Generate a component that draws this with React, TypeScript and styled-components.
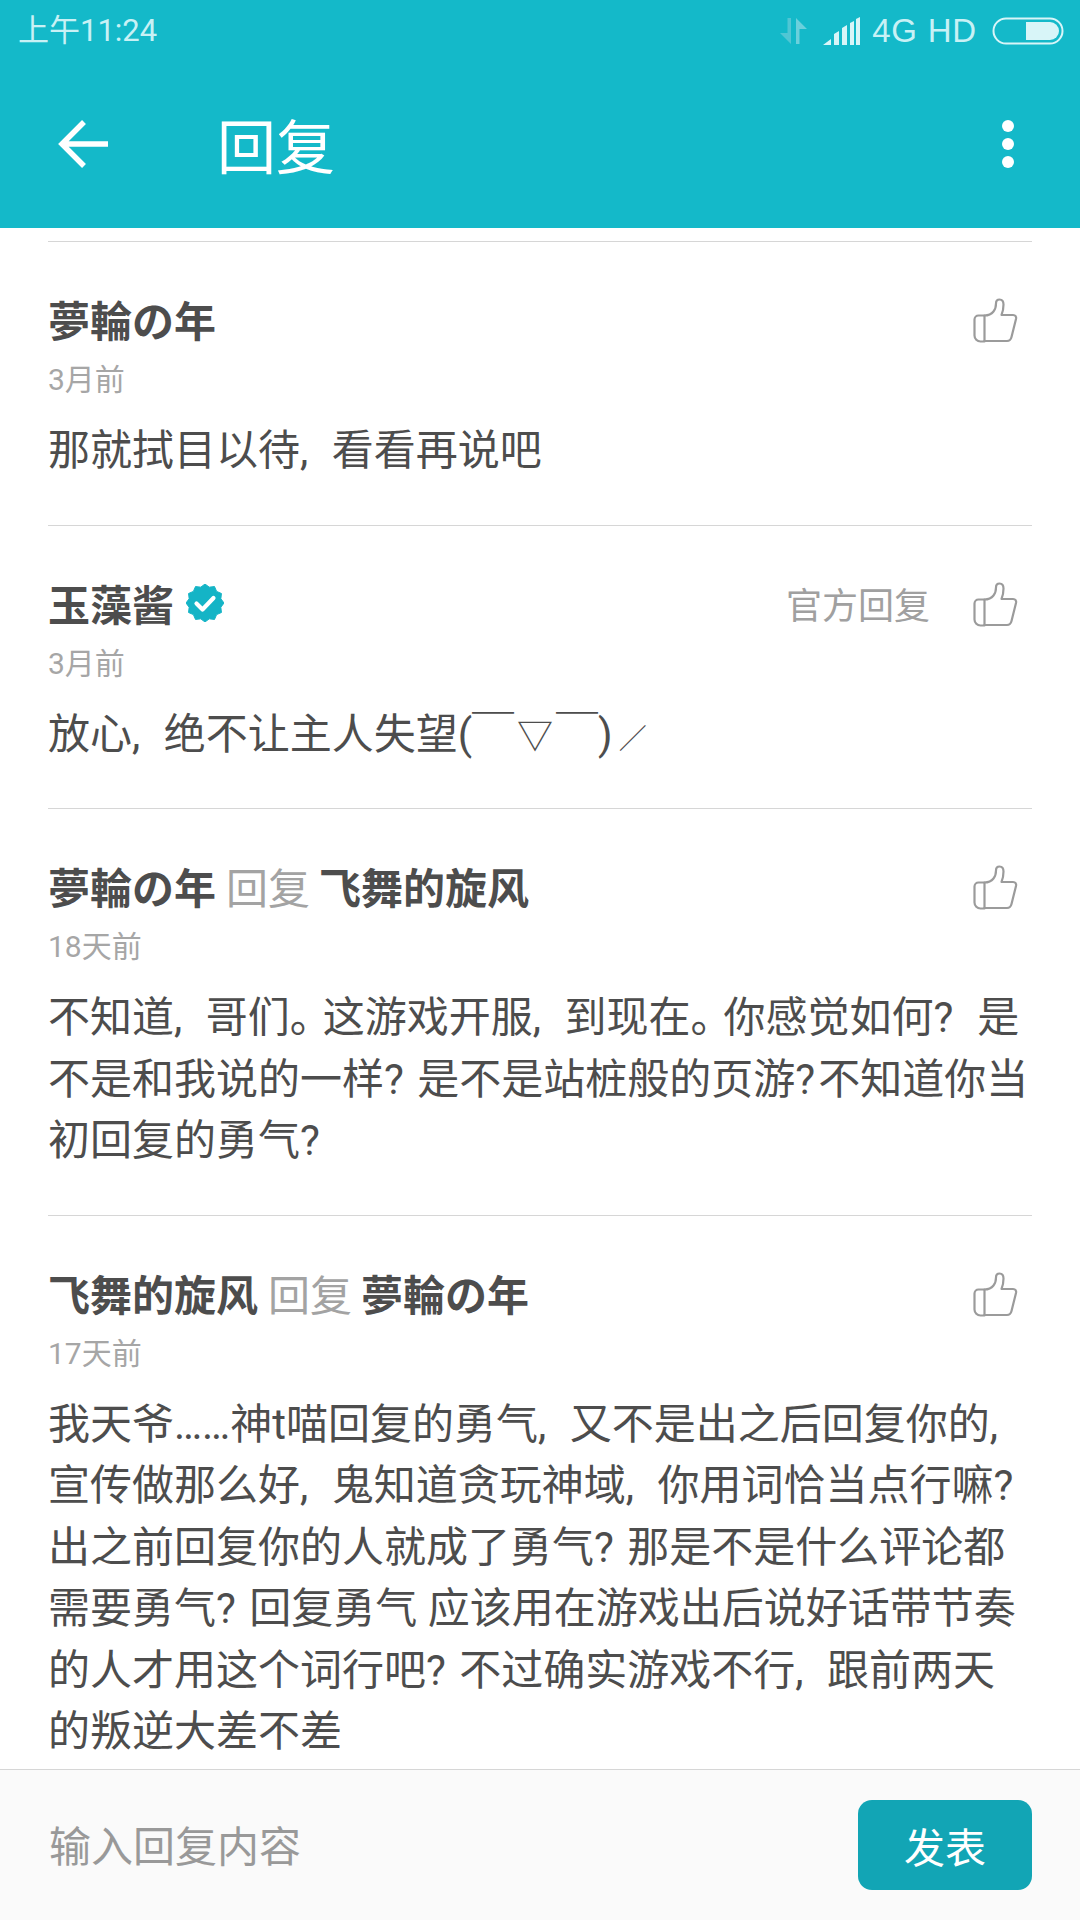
import React from 'react';
import styled, { createGlobalStyle } from 'styled-components';

const Global = createGlobalStyle`
  html, body { margin: 0; padding: 0; background: #fff; }
  body { font-family: "Noto Sans CJK SC", "Noto Sans", sans-serif; }
`;

const Screen = styled.div`
  width: 1080px;
  height: 1920px;
  display: flex;
  flex-direction: column;
  overflow: hidden;
  background: #fff;
`;

const Header = styled.header`
  height: 228px;
  flex: none;
  background: #14b9c9;
  display: flex;
  flex-direction: column;
`;

const StatusBar = styled.div`
  height: 62px;
  padding: 0 16px 0 18px;
  display: flex;
  align-items: center;
  color: #c8f1f5;
`;

const Clock = styled.span`
  font: 31px/62px Roboto, "Noto Sans CJK SC", sans-serif;
  flex: 1;
`;

const StatusIcons = styled.div`
  display: flex;
  align-items: center;
`;

const SignalIcon = styled.svg`
  margin-left: 14px;
`;

const Network = styled.span`
  font: 33px/60px "Liberation Sans", sans-serif;
  margin: 0 15px 0 11px;
  letter-spacing: 0.8px;
  white-space: nowrap;
`;

const NavBar = styled.div`
  flex: 1;
  display: flex;
  align-items: center;
  padding: 0 0 2px 58px;
`;

const Title = styled.h1`
  margin: 0 0 0 109px;
  flex: 1;
  font-size: 59px;
  line-height: 72px;
  font-weight: 400;
  color: #fff;
`;

const Dots = styled.div`
  display: flex;
  flex-direction: column;
  gap: 6px;
  margin-right: 66px;
`;

const Dot = styled.i`
  width: 12px;
  height: 12px;
  border-radius: 50%;
  background: #fff;
`;

const List = styled.main`
  flex: 1;
  min-height: 0;
  overflow: hidden;
  padding: 13px 48px 0 48px;
`;

const Comment = styled.article`
  border-top: 1px solid #d6d6d6;
  padding: 47px 0 43px 0;
`;

const NameRow = styled.div`
  display: flex;
  align-items: center;
  height: 60px;
`;

const Names = styled.div`
  flex: 1;
  display: flex;
  align-items: center;
  font-size: 42px;
  line-height: 60px;
  color: #4d4d4d;
`;

const Name = styled.strong`
  font-weight: 700;
`;

const Reply = styled.span`
  color: #a3a3a3;
  margin: 0 9px 0 10px;
`;

const Official = styled.span`
  font-size: 36px;
  color: #a0a0a0;
  margin: 0 42px 0 0;
`;

const Thumb = styled.svg`
  width: 46px;
  height: 46px;
  margin: 4px 14px 0 0;
  flex: none;
`;

const Badge = styled.svg`
  width: 38px;
  height: 38px;
  margin-left: 12px;
`;

const Time = styled.div`
  font: 30px/40px Roboto, "Noto Sans CJK SC", sans-serif;
  color: #a6a6a6;
  margin: 11px 0 20px;
`;

const Body = styled.p`
  margin: 0;
  font: 42px/61.5px Roboto, "Noto Sans CJK SC", sans-serif;
  color: #4d4d4d;
`;

const Line = styled.span`
  display: block;
  white-space: pre;
`;

const Comma = styled.span`
  margin-right: 13px;
`;

const Stop = styled.span`
  letter-spacing: -9px;
`;

const Ask = styled.span`
  margin-right: 3px;
`;

const Face = styled.span<{ $size: number; $gap: number }>`
  font-size: ${(p) => p.$size}px;
  line-height: 0;
  margin: 0 ${(p) => p.$gap}px;
`;

const Footer = styled.footer`
  height: 151px;
  flex: none;
  box-sizing: border-box;
  border-top: 1px solid #d6d6d6;
  background: #fafafa;
  display: flex;
  align-items: center;
  justify-content: space-between;
  padding: 0 48px 0 49px;
`;

const Placeholder = styled.span`
  font-size: 42px;
  color: #999;
  margin-bottom: 4px;
`;

const Send = styled.button`
  width: 174px;
  height: 90px;
  border: 0;
  border-radius: 14px;
  background: #12a5b5;
  color: #fff;
  font: 41px "Noto Sans CJK SC", sans-serif;
  padding: 0;
`;

const ThumbIcon = () => (
  <Thumb viewBox="0 0 46 46" fill="none" stroke="#9b9b9b" strokeWidth="2.2" strokeLinejoin="round" strokeLinecap="round">
    <path d="M12.5 17.5h-6a4 4 0 0 0-4 4v16a6 6 0 0 0 6 6h4z" />
    <path d="M12.5 17.5c4 0 7-1.500 9-4 2.500-3 2.500-5 2.500-8 0-2.500 1.500-4 3.500-4 2.500 0 4 2 4 5 0 3-.5 7-2 10.500h11.500c2.500 0 3.500 1.500 3 4l-4.500 18c-.6 2.500-2.200 4-4.500 4H12.500" />
  </Thumb>
);

const VerifiedBadge = () => {
  const pts: string[] = [];
  for (let i = 0; i < 24; i++) {
    const r = i % 2 === 0 ? 19 : 16.4;
    const a = (i / 24) * Math.PI * 2;
    pts.push(`${(19 + r * Math.sin(a)).toFixed(2)},${(19 - r * Math.cos(a)).toFixed(2)}`);
  }
  return (
    <Badge viewBox="0 0 38 38">
      <polygon points={pts.join(' ')} fill="#14b4c6" stroke="#14b4c6" strokeWidth="1" strokeLinejoin="round" />
      <path d="M10.500 19.500l6 6 11-11.500" fill="none" stroke="#fff" strokeWidth="4.200" strokeLinecap="round" strokeLinejoin="round" />
    </Badge>
  );
};

const App = () => (
  <Screen>
    <Global />
    <Header>
      <StatusBar>
        <Clock>上午11:24</Clock>
        <StatusIcons>
          <svg width="30" height="30" viewBox="0 0 30 30">
            <path d="M12 28L1 17h7.500V2H12z" fill="#50c6d4" />
            <path d="M17 2l11 11h-7.500v15H17z" fill="#6bd0dc" />
          </svg>
          <SignalIcon width="38" height="28" viewBox="0 0 38 28" fill="#d8f5f8">
            <path d="M0 28l8-6v6zM11 28v-11l5-3v14zM19 28V11l5-3v20zM27 28V6l4-2v24zM33 28V2l4-2v28z" />
          </SignalIcon>
          <Network>4G HD</Network>
          <svg width="72" height="28" viewBox="0 0 72 28">
            <rect x="1.500" y="1.500" width="69" height="25" rx="12.500" fill="none" stroke="#d8f5f8" strokeWidth="2" />
            <path d="M34 5h24a9 9 0 0 1 0 18H34z" fill="#d8f5f8" />
          </svg>
        </StatusIcons>
      </StatusBar>
      <NavBar>
        <svg width="50" height="48" viewBox="0 0 50 48" fill="none" stroke="#fff" strokeWidth="5.500">
          <path d="M50 24H4M26 2L4 24l22 22" />
        </svg>
        <Title>回复</Title>
        <Dots><Dot /><Dot /><Dot /></Dots>
      </NavBar>
    </Header>
    <List>
      <Comment>
        <NameRow>
          <Names><Name>夢輪の年</Name></Names>
          <ThumbIcon />
        </NameRow>
        <Time>3月前</Time>
        <Body>那就拭目以待<Comma>, </Comma>看看再说吧</Body>
      </Comment>
      <Comment>
        <NameRow>
          <Names><Name>玉藻酱</Name><VerifiedBadge /></Names>
          <Official>官方回复</Official>
          <ThumbIcon />
        </NameRow>
        <Time>3月前</Time>
        <Body>
          放心<Comma>, </Comma>绝不让主人失望(￣<Face $size={36} $gap={3}>▽</Face>￣)<Face $size={28} $gap={6}>／</Face>
        </Body>
      </Comment>
      <Comment>
        <NameRow>
          <Names><Name>夢輪の年</Name><Reply>回复</Reply><Name>飞舞的旋风</Name></Names>
          <ThumbIcon />
        </NameRow>
        <Time>18天前</Time>
        <Body>
          <Line>不知道<Comma>, </Comma>哥们<Stop>。</Stop>这游戏开服<Comma>, </Comma>到现在<Stop>。</Stop>你感觉如何<Ask>?</Ask>  是</Line>
          <Line>不是和我说的一样<Ask>?</Ask> 是不是站桩般的页游<Ask>?</Ask>不知道你当</Line>
          <Line>初回复的勇气?</Line>
        </Body>
      </Comment>
      <Comment>
        <NameRow>
          <Names><Name>飞舞的旋风</Name><Reply>回复</Reply><Name>夢輪の年</Name></Names>
          <ThumbIcon />
        </NameRow>
        <Time>17天前</Time>
        <Body>
          <Line>我天爷……神t喵回复的勇气<Comma>, </Comma>又不是出之后回复你的<Comma>,</Comma></Line>
          <Line>宣传做那么好<Comma>, </Comma>鬼知道贪玩神域<Comma>, </Comma>你用词恰当点行嘛?</Line>
          <Line>出之前回复你的人就成了勇气<Ask>?</Ask> 那是不是什么评论都</Line>
          <Line>需要勇气<Ask>?</Ask> 回复勇气 应该用在游戏出后说好话带节奏</Line>
          <Line>的人才用这个词行吧<Ask>?</Ask> 不过确实游戏不行<Comma>, </Comma>跟前两天</Line>
          <Line>的叛逆大差不差</Line>
        </Body>
      </Comment>
    </List>
    <Footer>
      <Placeholder>输入回复内容</Placeholder>
      <Send>发表</Send>
    </Footer>
  </Screen>
);

export default App;
